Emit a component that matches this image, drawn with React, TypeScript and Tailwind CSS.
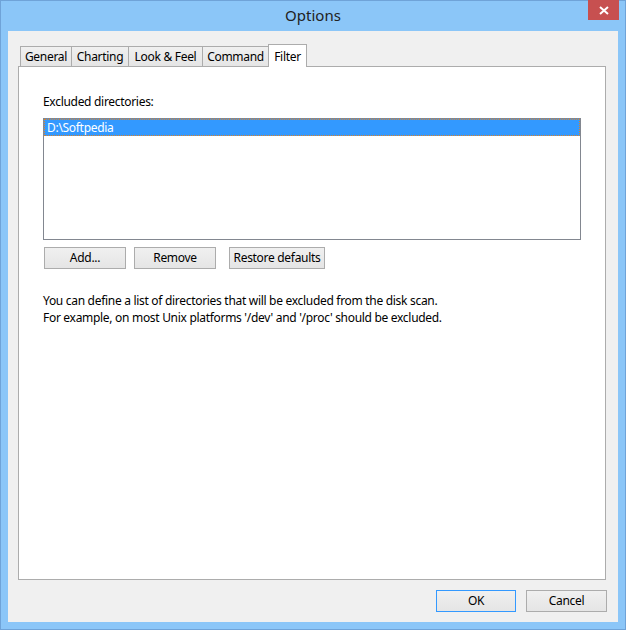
import React from "react";

const font = { fontFamily: '"Noto Sans", "Open Sans", sans-serif' };

function Tab({ label, w, selected }: { label: string; w: number; selected?: boolean }) {
  if (selected) {
    return (
      <div
        className="relative z-10 -mb-px flex h-[23px] items-start justify-center border border-b-0 border-[#acacac] bg-white pt-[3px] text-[12px] tracking-[-0.3px] text-black"
        style={{ width: w }}
      >
        {label}
      </div>
    );
  }
  return (
    <div
      className="flex h-[20px] items-center justify-center border border-r-0 border-b-0 border-[#acacac] bg-gradient-to-b from-[#f0f0f0] to-[#e5e5e5] text-[12px] tracking-[-0.3px] text-black"
      style={{ width: w }}
    >
      {label}
    </div>
  );
}

function Btn({ label, w, def, className = "" }: { label: string; w: number; def?: boolean; className?: string }) {
  return (
    <div
      className={
        "flex h-[22px] items-center justify-center border bg-gradient-to-b from-[#f0f0f0] to-[#e5e5e5] text-[12px] tracking-[-0.3px] text-black " +
        (def ? "border-[#3399ff] " : "border-[#acacac] ") +
        className
      }
      style={{ width: w }}
    >
      {label}
    </div>
  );
}

export default function App() {
  return (
    <div className="flex h-[630px] w-[626px] flex-col border border-[#6fa3d8] bg-[#8bc6f8]" style={font}>
      <div className="relative flex h-[30px] shrink-0 items-center justify-center">
        <span className="mt-[-1px] text-[15px] text-[#222]">Options</span>
        <div className="absolute right-[6px] top-[-1px] flex h-[20px] w-[31px] items-center justify-center bg-[#c75050]">
          <svg width="10" height="9" viewBox="0 0 10 9">
            <path d="M1 1 L9 8 M9 1 L1 8" stroke="white" strokeWidth="2" />
          </svg>
        </div>
      </div>
      <div className="mx-[7px] flex h-[591px] flex-col bg-[#f0f0f0] px-[10px] pt-[13px]">
        <div className="flex h-[22px] items-end pl-[2px]">
          <Tab label="General" w={51} />
          <Tab label="Charting" w={57} />
          <Tab label="Look & Feel" w={74} />
          <Tab label="Command" w={66} />
          <Tab label="Filter" w={39} selected />
        </div>
        <div className="h-[514px] w-[588px] border border-[#acacac] bg-white pl-[24px] pt-[27px] text-[12px] tracking-[-0.3px]">
          <div className="h-[24px] leading-[16px] text-black">Excluded directories:</div>
          <div className="h-[122px] w-[538px] border border-[#828790] bg-white">
            <div className="h-[17px] border border-dotted border-[#d9822b] bg-[#3399ff] pl-[2px] leading-[15px] text-white">
              D:\Softpedia
            </div>
          </div>
          <div className="mt-[7px] flex pl-px">
            <Btn label="Add..." w={82} />
            <Btn label="Remove" w={82} className="ml-[8px]" />
            <Btn label="Restore defaults" w={96} className="ml-[13px]" />
          </div>
          <div className="mt-[23px] leading-[17px] text-black">
            <div>You can define a list of directories that will be excluded from the disk scan.</div>
            <div>For example, on most Unix platforms '/dev' and '/proc' should be excluded.</div>
          </div>
        </div>
        <div className="mt-[10px] flex justify-end gap-[10px] pr-px">
          <Btn label="OK" w={80} def />
          <Btn label="Cancel" w={81} />
        </div>
      </div>
    </div>
  );
}
